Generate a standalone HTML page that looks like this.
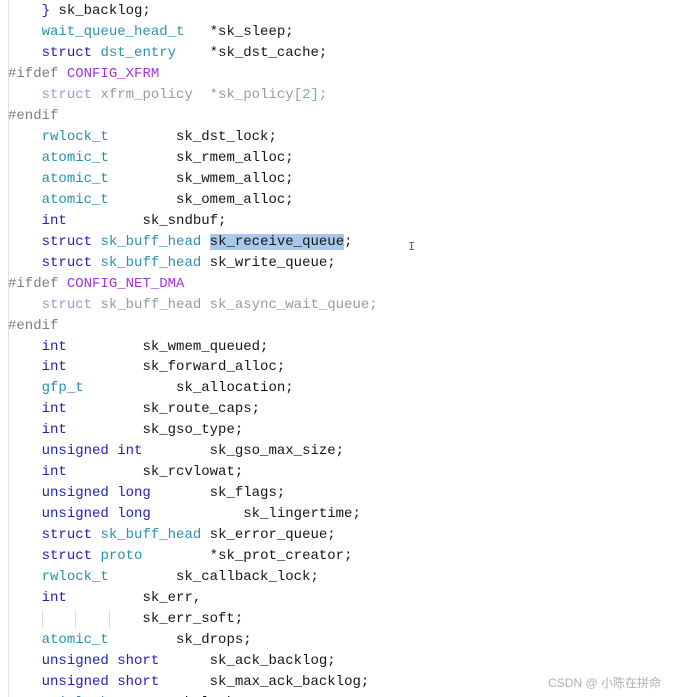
<!DOCTYPE html>
<html><head><meta charset="utf-8"><style>
html,body{margin:0;padding:0;background:#fff;width:679px;height:697px;overflow:hidden;position:relative}
.code{position:absolute;left:8px;top:1px;font-family:"Liberation Mono",monospace;font-size:14px;line-height:20.97px;color:#151515;white-space:pre}
.k{color:#2222b0}.t{color:#2b8fae}.p{color:#7d7d7d}.c{color:#a335d6}
.g{color:#9a9a9a}.gk{color:#9a9ad6}.gn{color:#7cb08a}
.hl{background:#a9c9ea}
.guide{position:absolute;left:8px;top:0;width:1px;height:697px;background:#e2e2e2}
.wm{position:absolute;right:18px;bottom:6px;font-family:"Liberation Sans","Noto Sans CJK SC",sans-serif;font-size:12px;color:#b0b0b0}
.cur{position:absolute;left:408px;top:240px;font-family:"Liberation Mono",monospace;font-size:12px;color:#666}
.vg{position:absolute;width:1px;height:18px;background:#ddd;top:610px}
</style></head><body>
<div class="guide"></div>
<div class="vg" style="left:42px"></div><div class="vg" style="left:75px"></div><div class="vg" style="left:109px"></div>
<div class="code">    <span class="k">}</span> sk_backlog;
    <span class="t">wait_queue_head_t</span>   *sk_sleep;
    <span class="k">struct</span> <span class="t">dst_entry</span>    *sk_dst_cache;
<span class="p">#ifdef</span> <span class="c">CONFIG_XFRM</span>
    <span class="gk">struct</span> <span class="g">xfrm_policy</span>  <span class="g">*sk_policy</span><span class="gn">[2]</span><span class="g">;</span>
<span class="p">#endif</span>
    <span class="t">rwlock_t</span>        sk_dst_lock;
    <span class="t">atomic_t</span>        sk_rmem_alloc;
    <span class="t">atomic_t</span>        sk_wmem_alloc;
    <span class="t">atomic_t</span>        sk_omem_alloc;
    <span class="k">int</span>         sk_sndbuf;
    <span class="k">struct</span> <span class="t">sk_buff_head</span> <span class="hl">sk_receive_queue</span>;
    <span class="k">struct</span> <span class="t">sk_buff_head</span> sk_write_queue;
<span class="p">#ifdef</span> <span class="c">CONFIG_NET_DMA</span>
    <span class="gk">struct</span> <span class="g">sk_buff_head sk_async_wait_queue;</span>
<span class="p">#endif</span>
    <span class="k">int</span>         sk_wmem_queued;
    <span class="k">int</span>         sk_forward_alloc;
    <span class="t">gfp_t</span>           sk_allocation;
    <span class="k">int</span>         sk_route_caps;
    <span class="k">int</span>         sk_gso_type;
    <span class="k">unsigned int</span>        sk_gso_max_size;
    <span class="k">int</span>         sk_rcvlowat;
    <span class="k">unsigned long</span>       sk_flags;
    <span class="k">unsigned long</span>           sk_lingertime;
    <span class="k">struct</span> <span class="t">sk_buff_head</span> sk_error_queue;
    <span class="k">struct</span> <span class="t">proto</span>        *sk_prot_creator;
    <span class="t">rwlock_t</span>        sk_callback_lock;
    <span class="k">int</span>         sk_err,
                sk_err_soft;
    <span class="t">atomic_t</span>        sk_drops;
    <span class="k">unsigned short</span>      sk_ack_backlog;
    <span class="k">unsigned short</span>      sk_max_ack_backlog;
    <span class="t">spinlock_t</span>      sk_lock;</div>
<div class="cur">I</div>
<div class="wm">CSDN @ 小陈在拼命</div>
</body></html>
